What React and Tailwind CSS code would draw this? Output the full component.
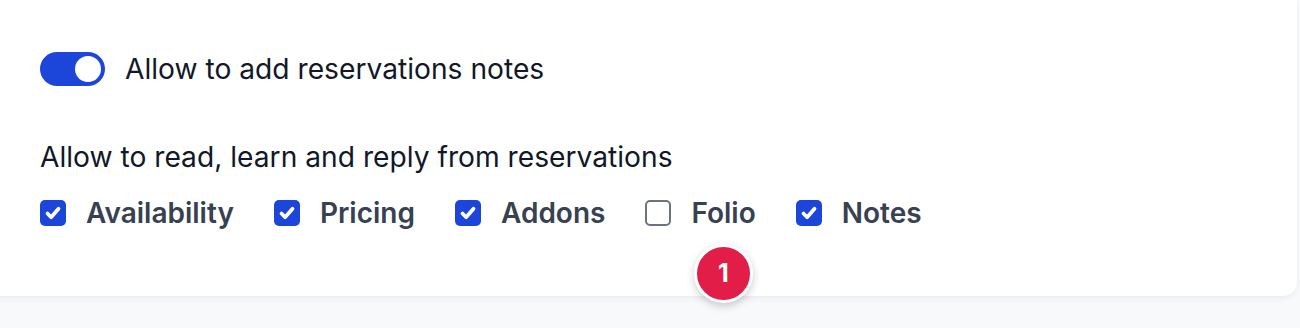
import React from 'react';

const options = [
  { label: 'Availability', checked: true },
  { label: 'Pricing', checked: true },
  { label: 'Addons', checked: true },
  { label: 'Folio', checked: false },
  { label: 'Notes', checked: true },
];

const Check = ({ checked }) =>
  checked ? (
    <span className="flex h-[26px] w-[26px] items-center justify-center rounded-[5px] bg-[#1c46da]">
      <svg viewBox="0 0 16 16" className="h-[20px] w-[20px]" fill="none" stroke="white" strokeWidth="3" strokeLinecap="round" strokeLinejoin="round">
        <path d="M3.6 8.4l2.9 3 5.9-6.8" />
      </svg>
    </span>
  ) : (
    <span className="h-[26px] w-[26px] rounded-[5px] border-2 border-[#6b7280] bg-white" />
  );

const App = () => {
  return (
    <div className="relative h-[328px] w-[1300px] overflow-hidden bg-[#f8f9fb] font-['Inter',sans-serif]">
      {/* Card */}
      <div className="-ml-4 h-[296px] w-[1313px] rounded-br-[14px] bg-white pl-14 pt-[52px] shadow-[0_2px_6px_rgba(0,0,0,0.06)]">
        <div className="flex items-center gap-5">
          <span className="flex h-[34px] w-[65px] items-center justify-end rounded-full bg-[#1c46da] pr-1">
            <span className="h-[26px] w-[26px] rounded-full bg-white" />
          </span>
          <span className="text-[28.2px] leading-[34px] text-[#111827]">Allow to add reservations notes</span>
        </div>

        <p className="mt-[54px] text-[28.2px] leading-[34px] text-[#111827]">Allow to read, learn and reply from reservations</p>

        <div className="mt-[22px] flex items-center gap-[40px]">
          {options.map((o) => (
            <label key={o.label} className="flex items-center gap-[20px]">
              <Check checked={o.checked} />
              <span className="text-[28px] font-semibold leading-[34px] text-[#374151]">{o.label}</span>
            </label>
          ))}
        </div>
      </div>

      {/* Badge */}
      <div className="absolute left-[694px] top-[244px] flex h-[59px] w-[59px] items-center justify-center rounded-full border-[3px] border-white bg-[#e11d48] shadow-[0_3px_8px_rgba(0,0,0,0.2)]">
        <span className="text-[25px] font-bold text-white">1</span>
      </div>
    </div>
  );
};

export default App;
